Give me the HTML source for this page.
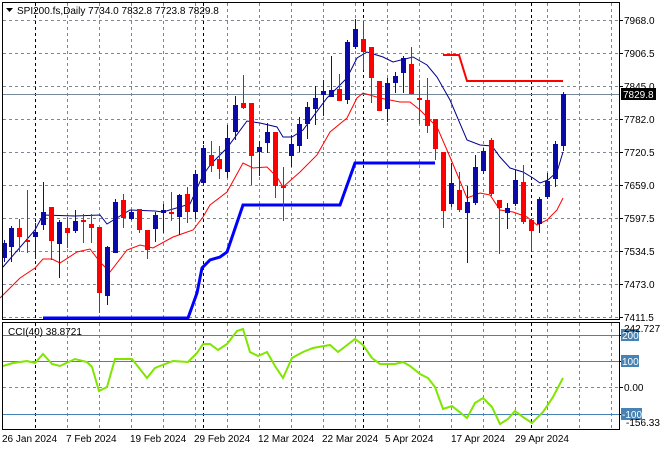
<!DOCTYPE html>
<html><head><meta charset="utf-8"><style>
html,body{margin:0;padding:0;background:#fff;}
svg{display:block;}
text{font-family:"Liberation Sans",sans-serif;font-size:10px;fill:#000;}
</style></head><body>
<svg id="c" width="660" height="450" xmlns="http://www.w3.org/2000/svg">
<rect width="660" height="450" fill="#fff"/>
<g id="grid" stroke="#7d8793" stroke-dasharray="3,3" stroke-width="1"></g>
<g id="sep" stroke="#000" stroke-dasharray="3,3" stroke-width="1"></g>
<line x1="3" y1="94.5" x2="620" y2="94.5" stroke="#778899"/>
<!-- CCI levels -->
<line x1="3" y1="335.5" x2="620" y2="335.5" stroke="#4682b4"/>
<line x1="3" y1="361.5" x2="620" y2="361.5" stroke="#4682b4"/>
<line x1="3" y1="414.5" x2="620" y2="414.5" stroke="#4682b4"/>
<!-- stop lines -->
<polyline fill="none" stroke="#0000ff" stroke-width="3" points="43,318 188,318 197,293 202,268 210,260 220,257 227,252 243,205 340,205 355,163 435,163"/>
<polyline fill="none" stroke="#ff0000" stroke-width="2" points="443,55 459,55 467,81 563,81"/>
<!-- MAs -->
<polyline fill="none" stroke="#ff0000" stroke-width="1" points="0,298 20,278 35,268 43,259 52,259 60,263 77,252 90,249 100,262 110,272 127,250 140,245 153,248 173,237 193,230 203,217 210,205 227,192 243,163 253,168 267,167 277,177 283,187 300,172 317,155 330,132 347,118 357,98 363,93 380,98 400,102 410,102 420,110 437,127 450,157 467,198 480,193 490,195 500,210 513,212 527,217 537,225 547,220 557,210 563,198"/>
<polyline fill="none" stroke="#00008b" stroke-width="1" points="3,267 35,230 43,215 75,216 100,215 107,224 130,210 155,211 163,212 190,204 203,175 211,164 227,148 247,121 260,123 277,127 283,137 292,137 303,130 327,98 347,78 357,58 367,52 383,57 393,62 413,57 427,65 437,77 450,100 467,140 480,145 492,146 500,157 510,168 523,172 533,178 540,183 548,180 557,172 563,152"/>
<g id="candles"></g>
<!-- CCI -->
<polyline fill="none" stroke="#7fe600" stroke-width="2" points="3,366 13,363 27,361 35,363 43,354 52,364 60,366 75,359 87,362 92,367 99,391 107,387 115,359 132,359 147,378 155,368 173,361 188,362 197,353 203,344 210,344 218,350 227,344 237,331 243,329 250,352 258,356 267,352 275,366 283,378 292,358 303,352 313,348 330,345 338,352 355,339 363,345 372,358 380,364 395,364 403,362 410,366 420,374 428,378 435,387 443,409 452,406 467,418 475,403 483,398 492,407 500,424 508,419 515,411 523,417 532,423 543,412 553,397 563,378"/>
<!-- frames -->
<rect x="2.5" y="2.5" width="617" height="317" fill="none" stroke="#000"/>
<rect x="2.5" y="322.5" width="617" height="107" fill="none" stroke="#000"/>
<g id="ticks" stroke="#000"></g>
<g id="labels"></g>
<path d="M6,8 L13,8 L9.5,12 Z" fill="#000"/>
<text x="17" y="14">SPI200.fs,Daily  7734.0 7832.8 7723.8 7829.8</text>
<text x="8" y="335">CCI(40) 38.8721</text>
<rect x="621" y="88" width="35" height="12" fill="#000"/>
<text x="623" y="98" style="fill:#fff">7829.8</text>
<rect x="621" y="329" width="18" height="12" fill="#4682b4"/>
<text x="622" y="339" style="fill:#fff">200</text>
<rect x="621" y="355" width="18" height="12" fill="#4682b4"/>
<text x="622" y="365" style="fill:#fff">100</text>
<rect x="621" y="408" width="21" height="12" fill="#4682b4"/>
<text x="622" y="418" style="fill:#fff">-100</text>
<text x="624" y="332">242.7276</text>
<text x="624" y="391">0.00</text>
<text x="626" y="426">-156.330</text>
<text x="2" y="442">26 Jan 2024</text>
<text x="66" y="442">7 Feb 2024</text>
<text x="130" y="442">19 Feb 2024</text>
<text x="194" y="442">29 Feb 2024</text>
<text x="258" y="442">12 Mar 2024</text>
<text x="322" y="442">22 Mar 2024</text>
<text x="385" y="442">5 Apr 2024</text>
<text x="451" y="442">17 Apr 2024</text>
<text x="515" y="442">29 Apr 2024</text>
</svg>
<script>
var NS="http://www.w3.org/2000/svg";
function el(p,t,a){var e=document.createElementNS(NS,t);for(var k in a)e.setAttribute(k,a[k]);p.appendChild(e);return e;}
var g=document.getElementById('grid');
[67,99,131,163,195,227,259,291,323,355,387,419,451,483,515,547,579,611].forEach(function(x){
 el(g,'line',{x1:x+.5,y1:3,x2:x+.5,y2:319});el(g,'line',{x1:x+.5,y1:323,x2:x+.5,y2:429});});
[20,53,86,119,152,185,218,251,284,317].forEach(function(y){el(g,'line',{x1:3,y1:y+.5,x2:619,y2:y+.5});});
el(g,'line',{x1:3,y1:387.5,x2:619,y2:387.5});
var s=document.getElementById('sep');
[35,203,363,531].forEach(function(x){el(s,'line',{x1:x+.5,y1:3,x2:x+.5,y2:319});el(s,'line',{x1:x+.5,y1:323,x2:x+.5,y2:429});});
var tk=document.getElementById('ticks'),lb=document.getElementById('labels');
var pr=["7968.0","7906.5","7845.0","7782.0","7720.5","7659.0","7597.5","7534.5","7473.0","7411.5"];
pr.forEach(function(p,i){var y=20+i*33;el(tk,'line',{x1:620,y1:y+.5,x2:623,y2:y+.5});
 if(p!="7845.0"||true){var t=el(lb,'text',{x:624,y:y+4});t.textContent=p;}});
[335,361,387,414].forEach(function(y){el(tk,'line',{x1:620,y1:y+.5,x2:623,y2:y+.5});});
// x, bodyTop, bodyBot, wickTop, wickBot, up(1 blue)
var C=[
[4,243,258,240,262,1],[11,228,247,226,262,1],[19,228,237,219,252,0],[27,240,242,190,253,0],[35,232,237,223,259,1],
[43,212,225,182,230,1],[51,207,241,207,260,0],[59,222,244,220,278,1],[67,228,233,217,248,0],[75,221,231,210,233,1],
[83,220,222,214,243,0],[91,224,228,214,243,0],[99,227,293,227,313,0],[107,247,296,246,305,1],[115,202,253,199,253,1],
[123,200,218,194,228,0],[131,212,219,210,220,1],[139,209,230,209,233,0],[147,230,250,230,259,0],[155,215,229,212,242,1],
[163,210,213,204,233,1],[171,212,214,192,221,0],[179,195,217,194,235,1],[187,194,212,187,223,0],[195,174,212,170,219,1],
[203,148,183,145,186,1],[211,155,166,141,172,0],[219,159,169,146,179,0],[227,138,172,125,178,1],[235,105,132,96,140,1],
[243,103,108,75,109,0],[251,103,156,103,185,0],[259,147,152,141,176,1],[267,132,143,123,153,1],[275,132,186,132,198,0],
[283,186,188,167,221,0],[291,144,156,135,167,1],[299,124,146,117,152,1],[307,107,124,102,139,1],[315,98,109,86,125,1],
[323,91,95,80,116,1],[331,90,97,56,97,0+1],[339,89,101,74,101,0],[347,42,100,40,104,1],[355,29,47,19,49,1],
[363,39,52,21,70,0],[371,47,78,47,103,0],[379,81,111,81,111,0],[387,83,109,78,122,1],[395,76,83,72,93,1],
[403,58,73,56,93,1],[411,64,94,47,94,0],[419,98,100,80,124,0],[427,100,126,78,133,0],[435,119,149,119,160,0],
[443,152,211,152,228,0],[451,183,204,163,207,1],[459,190,210,172,212,0],[467,202,213,186,263,1],[475,167,203,155,205,1],
[483,151,171,148,174,1],[491,140,194,138,196,0],[499,200,208,200,254,0],[507,208,213,203,229,1],[515,180,204,170,206,1],
[523,182,222,165,224,0],[531,220,231,220,251,0],[539,199,224,197,233,1],[547,181,197,173,199,1],[555,144,179,141,187,1],
[563,94,146,92,151,1]];
var cg=document.getElementById('candles');
C.forEach(function(c){var col=c[5]?'#0a0aa8':'#ff0000';
 el(cg,'line',{x1:c[0]+.5,y1:c[3],x2:c[0]+.5,y2:c[4],stroke:col});
 el(cg,'rect',{x:c[0]-2,y:c[1],width:5,height:Math.max(2,c[2]-c[1]),fill:col});});
</script>
</body></html>
